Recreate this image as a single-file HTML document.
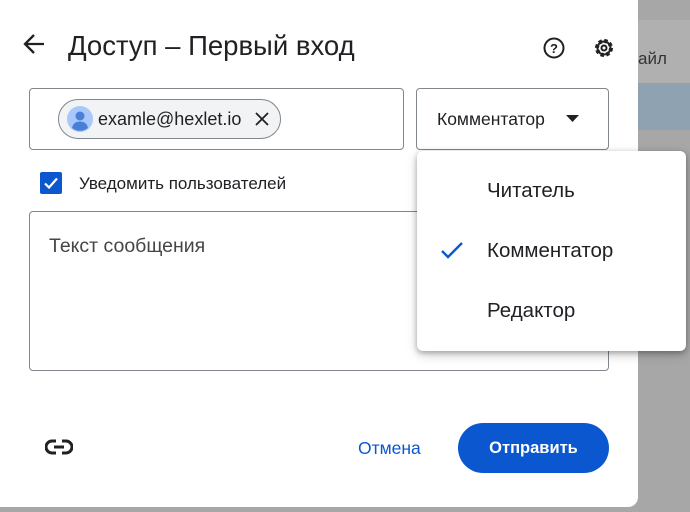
<!DOCTYPE html>
<html><head><meta charset="utf-8"><style>
*{box-sizing:border-box;margin:0;padding:0}
body{width:690px;height:512px;overflow:hidden;background:#a7a7a7;font-family:"Liberation Sans",Arial,sans-serif;position:relative;color:#202124}
.bg1{position:absolute;left:600px;top:20px;width:90px;height:63px;background:#b0b0b0}
.bg2{position:absolute;left:600px;top:83px;width:90px;height:47px;background:#8ea2b1}
.fl{position:absolute;left:638px;top:49px;font-size:17px;color:#333}
.dlg{position:absolute;left:-10px;top:-10px;width:648px;height:517px;background:#fff;border-radius:10px}
.abs{position:absolute}
.box{position:absolute;border:1px solid #80868b;border-radius:4px}
.menu{position:absolute;left:417px;top:151px;width:269px;height:200px;background:#fff;border-radius:6px;box-shadow:0 2px 6px rgba(0,0,0,.3),0 4px 12px rgba(0,0,0,.15)}
.mi{position:absolute;left:70px;font-size:20.5px;color:#202124}
</style></head><body>
<div class="bg1"></div><div class="bg2"></div><div class="fl">айл</div>
<div class="dlg"></div>
<svg class="abs" style="left:22px;top:33px" width="24" height="22" viewBox="0 0 24 22"><path d="M22 11H4M12 2L3 11l9 9" stroke="#202124" stroke-width="2.3" fill="none"/></svg>
<div class="abs" style="left:68px;top:30px;font-size:27.5px;color:#202124">Доступ – Первый вход</div>
<svg class="abs" style="left:542px;top:36px" width="24" height="24" viewBox="0 0 24 24"><circle cx="12" cy="12" r="9.5" stroke="#202124" stroke-width="2" fill="none"/><text x="12" y="17" font-size="13" text-anchor="middle" font-family="Liberation Sans" fill="#202124" font-weight="bold">?</text></svg>
<svg class="abs" style="left:592px;top:36px" width="24" height="24" viewBox="0 0 24 24"><circle cx="12" cy="12" r="7" stroke="#202124" stroke-width="4" fill="none" stroke-dasharray="3.2 2.3"/><circle cx="12" cy="12" r="6.5" stroke="#202124" stroke-width="2" fill="none"/><circle cx="12" cy="12" r="2.5" stroke="#202124" stroke-width="2" fill="none"/></svg>
<div class="box" style="left:29px;top:88px;width:375px;height:62px"></div>
<div class="abs" style="left:58px;top:99px;width:223px;height:40px;border:1px solid #80868b;border-radius:20px;background:#f1f3f4"></div>
<svg class="abs" style="left:67px;top:106px" width="26" height="26" viewBox="0 0 26 26"><circle cx="13" cy="13" r="13" fill="#a8c7fa"/><circle cx="13" cy="10" r="4.5" fill="#4a7fd8"/><path d="M5 22c1-5 4.5-6.5 8-6.5s7 1.5 8 6.5a13 13 0 0 1-16 0z" fill="#4a7fd8"/></svg>
<div class="abs" style="left:98px;top:109px;font-size:18px;color:#202124">examle@hexlet.io</div>
<svg class="abs" style="left:255px;top:112px" width="14" height="14" viewBox="0 0 14 14"><path d="M1 1l12 12M13 1L1 13" stroke="#202124" stroke-width="1.8"/></svg>
<div class="box" style="left:416px;top:88px;width:193px;height:62px"></div>
<div class="abs" style="left:437px;top:109px;font-size:17.5px;color:#202124">Комментатор</div>
<svg class="abs" style="left:566px;top:115px" width="14" height="8"><path d="M0 0h13L6.5 7z" fill="#202124"/></svg>
<div class="abs" style="left:40px;top:172px;width:22px;height:22px;background:#0b57d0;border-radius:2px"></div>
<svg class="abs" style="left:42px;top:174px" width="18" height="18" viewBox="0 0 18 18"><path d="M3 9.5l4 4 8-9" stroke="#fff" stroke-width="2.2" fill="none"/></svg>
<div class="abs" style="left:79px;top:174px;font-size:17px;color:#202124">Уведомить пользователей</div>
<div class="box" style="left:29px;top:211px;width:580px;height:160px"></div>
<div class="abs" style="left:49px;top:235px;font-size:19.5px;color:#444746">Текст сообщения</div>
<svg class="abs" style="left:45px;top:438px" width="28" height="18" viewBox="0 0 28 18"><path d="M11 3H7a6 6 0 0 0 0 12h4M17 3h4a6 6 0 0 1 0 12h-4M9 9h10" stroke="#202124" stroke-width="3" fill="none"/></svg>
<div class="abs" style="left:358px;top:438px;font-size:17.5px;color:#0b57d0">Отмена</div>
<div class="abs" style="left:458px;top:423px;width:151px;height:50px;background:#0b57d0;border-radius:25px;color:#fff;font-weight:bold;font-size:16.5px;text-align:center;line-height:50px">Отправить</div>
<div class="menu">
<div class="mi" style="top:28px">Читатель</div>
<svg class="abs" style="left:24px;top:91px" width="22" height="18" viewBox="0 0 22 18"><path d="M1 9l6 6L21 1" stroke="#0b57d0" stroke-width="2.4" fill="none"/></svg>
<div class="mi" style="top:88px">Комментатор</div>
<div class="mi" style="top:148px">Редактор</div>
</div>
</body></html>
